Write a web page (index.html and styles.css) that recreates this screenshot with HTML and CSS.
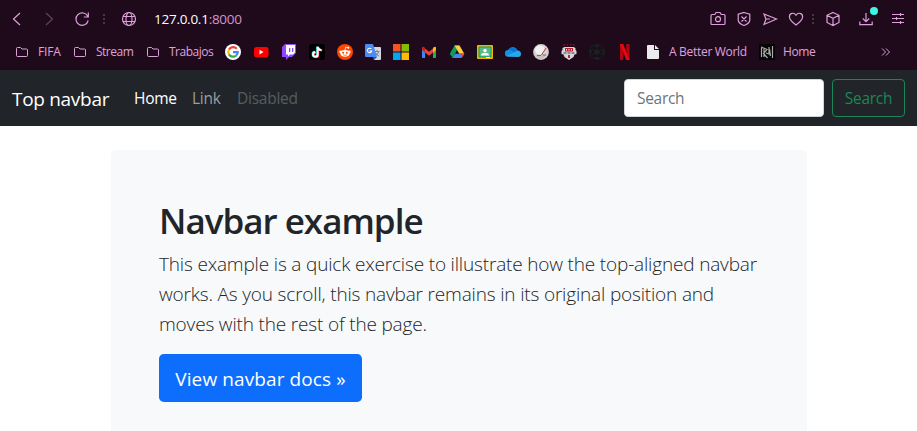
FILE: index.html
```html
<!DOCTYPE html>
<html lang="en">
<head>
<meta charset="utf-8">
<title>Top navbar</title>
<link rel="stylesheet" href="styles.css">
</head>
<body>
<header class="browser">
  <div class="toolbar">
    <svg class="ico back" viewBox="0 0 18 18"><path d="M12 3 5.500 9 12 15"/></svg>
    <svg class="ico forward" viewBox="0 0 18 18"><path d="M6 3l6.500 6L6 15"/></svg>
    <svg class="ico reload" viewBox="0 0 18 18"><path d="M14.800 6.500A6.200 6.200 0 1 0 15.200 10.500M15.300 2.500v4.500h-4.500"/></svg>
    <svg class="dots" viewBox="0 0 4 18"><path d="M1 4h2v2H1zM1 8h2v2H1zM1 12h2v2H1z"/></svg>
    <svg class="ico globe" viewBox="0 0 18 18"><circle cx="9" cy="9" r="6.500"/><ellipse cx="9" cy="9" rx="3" ry="6.500"/><path d="M3 6.500h12M3 11.500h12"/></svg>
    <div class="url">127.0.0.1<span>:8000</span></div>
    <div class="tools">
      <svg class="ico" viewBox="0 0 18 18"><path d="M3 4.500h2.800l1.200-2h4l1.200 2H15q1 0 1 1v8q0 1-1 1H3q-1 0-1-1v-8q0-1 1-1z"/><circle cx="9" cy="9.200" r="2.500"/></svg>
      <svg class="ico" viewBox="0 0 18 18"><path d="M9 2.500l5.800 1.800v6Q14.300 13.500 9 15.500 3.700 13.500 3.200 10.300v-6zM6.500 6.500l5 5M11.500 6.500l-5 5"/></svg>
      <svg class="ico" viewBox="0 0 18 18"><path d="M3 4l12.500 5L3 14.500 5 9zM5 9h4"/></svg>
      <svg class="ico" viewBox="0 0 18 18"><path d="M9 15C6 12.800 2.400 10 2.400 6.700 2.400 3 7 2 9 5.200 11 2 15.600 3 15.600 6.700 15.600 10 12 12.800 9 15z"/></svg>
      <svg class="dots tools-dots" viewBox="0 0 4 18"><path d="M1 4h2v2H1zM1 8h2v2H1zM1 12h2v2H1z"/></svg>
      <svg class="ico cube" viewBox="0 0 18 18"><path d="M9 2.500l6 2.800v7.200l-6 3-6-3V5.300zM3 5.300l6 3 6-3M9 8.300v7"/></svg>
      <div class="download">
        <svg class="ico" viewBox="0 0 18 18"><path d="M9 3v8.500M5.800 8.500 9 11.700l3.200-3.200M2.800 11.500v3.200h12.400v-3.200"/></svg>
        <i class="badge"></i>
      </div>
      <svg class="ico sliders" viewBox="0 0 18 18"><path d="M3 4.500h12M3 8.500h12M3 12.500h12M11.500 3v3M7.500 7v3M11.500 11v3"/></svg>
    </div>
  </div>
  <nav class="bookmarks">
    <svg class="folder" viewBox="0 0 12 12"><path d="M1.500 1.500h3L6 3h4.500q1 0 1 1v5.500q0 1-1 1h-9q-1 0-1-1v-7q0-1 1-1z"/></svg><span class="label fifa">FIFA</span>
    <svg class="folder" viewBox="0 0 12 12"><path d="M1.500 1.500h3L6 3h4.500q1 0 1 1v5.500q0 1-1 1h-9q-1 0-1-1v-7q0-1 1-1z"/></svg><span class="label stream">Stream</span>
    <svg class="folder" viewBox="0 0 12 12"><path d="M1.500 1.500h3L6 3h4.500q1 0 1 1v5.500q0 1-1 1h-9q-1 0-1-1v-7q0-1 1-1z"/></svg><span class="label trabajos">Trabajos</span>
    <div class="sites">
      <svg viewBox="0 0 16 16"><circle cx="8" cy="8" r="8" fill="#fff"/><g fill="none" stroke-width="2.200"><path d="M11.700 4.700A4.700 4.700 0 0 0 4 5.600" stroke="#ea4335"/><path d="M4 5.600a4.700 4.700 0 0 0 0 4.800" stroke="#fbbc05"/><path d="M4 10.400a4.700 4.700 0 0 0 7.200 1.100" stroke="#34a853"/><path d="M11.200 11.500A4.700 4.700 0 0 0 12.700 8.200H8" stroke="#4285f4"/></g></svg>
      <svg viewBox="0 0 16 16"><rect x="1" y="3" width="14.500" height="10.500" rx="2.500" fill="red"/><path d="M6.500 5.800v4.600l4-2.300z" fill="#fff"/></svg>
      <svg viewBox="0 0 16 16"><path d="M4 0h11v9l-4 4H8l-3 3v-3H1V3z" fill="#9146ff"/><path d="M5 1h9v7.500L12 10.500H9L7 12.500v-2H5z" fill="#fff"/><path d="M8 4h1.300v4H8zM11 4h1.300v4H11z" fill="#9146ff"/></svg>
      <svg viewBox="0 0 16 16"><rect width="16" height="16" rx="3" fill="#000"/><g fill="none" stroke-width="1.900"><path d="M8.200 2.500v7.700a2.300 2.300 0 1 1-2.300-2.400M8.200 3q.5 2.700 3.700 3" stroke="#25f4ee"/><path d="M9.300 3.200v7.700A2.300 2.300 0 1 1 7 8.600M9.300 3.500q.7 2.700 3.900 3" stroke="#fe2c55"/><path d="M8.700 2.800v7.700a2.300 2.300 0 1 1-2.300-2.300M8.700 3q.6 2.900 3.800 3.300" stroke="#fff"/></g></svg>
      <svg viewBox="0 0 16 16"><circle cx="8" cy="8" r="8" fill="#ff4500"/><ellipse cx="8" cy="9.300" rx="4.600" ry="3.400" fill="#fff"/><circle cx="3.500" cy="7.800" r="1.200" fill="#fff"/><circle cx="12.500" cy="7.800" r="1.200" fill="#fff"/><path d="M8 6l.8-3 2.500.6" fill="none" stroke="#fff" stroke-width=".8"/><circle cx="11.300" cy="3.700" r="1" fill="#fff"/><circle cx="6.200" cy="8.700" r="1" fill="#ff4500"/><circle cx="9.800" cy="8.700" r="1" fill="#ff4500"/><path d="M6 10.800q2 1.200 4 0" fill="none" stroke="#ff4500" stroke-width=".7"/></svg>
      <svg viewBox="0 0 16 16"><path d="M7 3h8q1 0 1 1v11q0 1-1 1H9z" fill="#d6d7dc"/><path d="M9.500 7.500h5M12 6v1.500M13.800 7.500Q13 10.500 9.800 12M10.500 8.500q1.500 3 3.800 3.700" fill="none" stroke="#70858c"/><path d="M1 0h7l4 13H1q-1 0-1-1V1q0-1 1-1z" fill="#4c8bf5"/><path d="M7.800 12.900H12L9 16z" fill="#2058bc"/><path d="M6.300 5A2.200 2.200 0 1 0 6.700 7H4.600" fill="none" stroke="#fff" stroke-width="1.100"/></svg>
      <svg viewBox="0 0 16 16"><path d="M0 0h7.500v7.500H0z" fill="#f35325"/><path d="M8.500 0H16v7.500H8.500z" fill="#81bc06"/><path d="M0 8.500h7.500V16H0z" fill="#05a6f0"/><path d="M8.500 8.500H16V16H8.500z" fill="#ffba08"/></svg>
      <svg viewBox="0 0 16 16"><path d="M1 4l3 2v8H2q-1 0-1-1z" fill="#4285f4"/><path d="M15 4l-3 2v8h2q1 0 1-1z" fill="#34a853"/><path d="M4 4.500 8 7.700l4-3.200v4L8 11.700 4 8.500z" fill="#ea4335"/><path d="M1 4q0-2 2-1l1 1v4.500L1 6z" fill="#c5221f"/><path d="M15 4q0-2-2-1l-1 1v4.500L15 6z" fill="#fbbc04"/></svg>
      <svg viewBox="0 0 16 16"><path d="M5.500 1.500h5L8 6 3.700 14 .8 9.700z" fill="#0f9d58"/><path d="M5.500 1.500h5l4.800 8.200h-5z" fill="#ffcd40"/><path d="M3.500 14 6 9.700h9.300L12.500 14z" fill="#4285f4"/><path d="M11 9.700h4.300L13.500 13z" fill="#ea4335"/></svg>
      <svg viewBox="0 0 16 16"><rect y="1" width="16" height="14" rx="1" fill="#f4b400"/><path d="M2 3h12v10H2z" fill="#57bb8a"/><path d="M2 3h12v10H2z" fill="none" stroke="#0f9d58"/><circle cx="8" cy="6.500" r="1.700" fill="#fff"/><path d="M4 11.500q0-2.800 4-2.800t4 2.800z" fill="#fff"/><path d="M9 13h4v1H9z" fill="#fff"/></svg>
      <svg viewBox="0 0 16 16"><path d="M3 12.800q-3-.3-3-3.300 0-3 3-3.300Q5 2.700 8.500 3.200q3 .3 4 3.300 3.500.3 3.500 3.400 0 2.800-3 3z" fill="#28a8ea"/><path d="M0 9.500q0-3 3-3.300Q5 2.700 8.500 3.200q3 .3 4 3.300L7 9l-6 2.500z" fill="#0874d4"/><path d="M3 6.200q3-.6 6 2.100l-7.700 3.700Q0 11 0 9.500q0-3 3-3.300z" fill="#1490df"/></svg>
      <svg viewBox="0 0 16 16"><circle cx="8" cy="8" r="7.900" fill="#d5d3d1"/><ellipse cx="7" cy="6" rx="5" ry="4.500" fill="#f2f1ef"/><path d="M2 11q6 1 11.500-1-1 4-5.500 5-4-.5-6-4z" fill="#c4c0be"/><path d="M13 4 8.500 11" stroke="#b73535"/><path d="M4 11.500h4M10 11h3" stroke="#866"/></svg>
      <svg viewBox="0 0 16 16"><path d="M2.500 1h1.500M5.500 .7H7M9 .7h1.500M12 1h1.500" stroke="#8b1225" stroke-width="1.300"/><path d="M1.500 4l2-1h9l2 1v2l1 1v3l-2 .5-1 2.500L8 16l-4.500-3-1-2.500L.5 10V7l1-1z" fill="#d8d5d8"/><path d="M4 4h8v3.500H4z" fill="#bc1f2f"/><path d="M5.500 5v1.500M8 5v1.500M10.500 5v1.500" stroke="#eee"/><path d="M2.500 9h3M6.500 9h3M10.500 9h3" stroke="#776f76" stroke-width="1.300"/><path d="M7 11h2v3H7z" fill="#bd2231"/></svg>
      <svg viewBox="0 0 16 16"><g fill="none" stroke="#15251f"><circle cx="8" cy="8" r="7.400"/><path d="M8 5V2M5.500 9.500l-3 1.500M10.500 9.500l3 1.500M5.500 6.500 3 5M10.500 6.500 13 5"/></g><path d="M8 5l3 2-1 3.500H6L5 7zM5 1h6L8 3.500zM0 6l3 0-1 5zM16 6l-3 0 1 5zM5 15l1-2h4l1 2z" fill="#15251f"/></svg>
      <svg viewBox="0 0 16 16"><path d="M3 0h3.200v16H3zM9.300 0h3.200v16H9.300z" fill="#b1060f"/><path d="M3 0h3.200l6.300 16H9.300z" fill="#e50914"/></svg>
      <svg viewBox="0 0 16 16"><path d="M3 1h6v5h5v8q0 1-1 1H3q-1 0-1-1V2q0-1 1-1zM10 1l4 4h-4z" fill="#e8eaed"/></svg>
    </div>
    <span class="label world">A Better World</span>
    <svg class="rune" viewBox="0 0 16 16"><path d="M0 0h16v16H0z" fill="#050505"/><path d="M2.500 4v9M2 3l6 2.500-3.500 4L8.500 14M5 5v8M10 3v7l-3-1M10.500 5l1 7M13.500 2v12" fill="none" stroke="#aaa" stroke-width="1.200"/></svg>
    <span class="label home">Home</span>
    <svg class="more" viewBox="0 0 10 10"><path d="M1 1.500 4.500 5 1 8.500M5 1.500 8.500 5 5 8.500"/></svg>
  </nav>
</header>
<nav class="navbar">
  <a class="brand">Top navbar</a>
  <a class="link active">Home</a>
  <a class="link second">Link</a>
  <a class="link disabled">Disabled</a>
  <form class="search">
    <input type="search" placeholder="Search" aria-label="Search">
    <button type="button">Search</button>
  </form>
</nav>
<main class="container">
  <section class="panel">
    <h1>Navbar example</h1>
    <p>This example is a quick exercise to illustrate how the top-aligned navbar<br>works. As you scroll, this navbar remains in its original position and<br>moves with the rest of the page.</p>
    <a class="docs">View navbar docs »</a>
  </section>
</main>
</body>
</html>
```
FILE: styles.css
```css
* { box-sizing: border-box; }
body { margin: 0; height: 431px; overflow: hidden; background: #fff; color: #212529; font: 15.5px/24px "Open Sans", "Noto Sans", sans-serif; }
svg { display: block; flex: none; }

.browser { height: 70px; background: #1f0a1c; color: #e0a0dc; }
.toolbar { display: flex; align-items: center; height: 38px; padding: 0 10px 0 8px; }
.ico { width: 18px; height: 18px; fill: none; stroke: #dc9fd9; stroke-width: 1.2; }
.forward { margin-left: 14px; stroke: #64405f; }
.reload { margin-left: 15px; }
.dots { width: 4px; height: 18px; margin-left: 11px; fill: #49344a; }
.globe { margin-left: 14px; }
.url { margin-left: 16px; font-size: 13.5px; letter-spacing: -.26px; white-space: nowrap; color: #fff; }
.url span { color: #d394d0; }
.tools { display: flex; align-items: center; margin-left: auto; }
.tools .ico + .ico { margin-left: 8px; }
.tools .tools-dots { margin-left: 6px; }
.tools .cube { margin-left: 9px; }
.download { position: relative; margin-left: 15px; }
.badge { position: absolute; left: 13px; top: -3px; width: 8px; height: 8px; border-radius: 50%; background: #3ff5e4; }
.tools .sliders { margin-left: 14px; }

.bookmarks { display: flex; align-items: center; height: 28px; padding: 0 26px 0 16px; }
.folder { width: 12px; height: 12px; margin-right: 10px; fill: none; stroke: #dc9fd9; }
.label { flex: none; font-size: 12px; line-height: 20px; white-space: nowrap; }
.fifa { width: 36px; letter-spacing: -.2px; }
.stream { width: 51px; letter-spacing: -.5px; }
.trabajos { width: 56px; letter-spacing: -.5px; }
.sites { display: flex; gap: 12px; }
.sites svg, .rune { width: 16px; height: 16px; }
.world { width: 90px; margin-left: 8px; letter-spacing: -.3px; }
.home { margin-left: 8px; letter-spacing: -.4px; }
.more { width: 10px; height: 10px; margin-left: auto; fill: none; stroke: #dc9fd9; }

.navbar { display: flex; align-items: center; height: 56px; padding: 0 12px; background: #212529; color: #fff; }
.brand { width: 122px; padding-top: 1px; font-size: 19px; line-height: 30px; white-space: nowrap; letter-spacing: -.3px; }
.link { white-space: nowrap; letter-spacing: -.25px; }
.active { width: 58px; }
.second { width: 45px; color: #9b9d9f; }
.disabled { color: #585c5f; }
.search { display: flex; gap: 8px; margin-left: auto; }
.search input { width: 200px; height: 38px; padding: 6px 12px; border: 1px solid #ced4da; border-radius: 4px; background: #fff; font: inherit; letter-spacing: -.3px; }
.search input::placeholder { color: #6c757d; opacity: 1; }
.search button { width: 73px; height: 38px; padding: 0; border: 1px solid #198754; border-radius: 4px; background: none; color: #198754; font: inherit; letter-spacing: -.3px; }

.container { width: 696px; margin: 24px auto 0 111px; }
.panel { height: 300px; padding: 49px 48px 0; border-radius: 4.800px; background: #f8f9fa; }
h1 { margin: 0 0 7px; font-size: 35px; line-height: 43px; font-weight: 600; letter-spacing: -1px; white-space: nowrap; }
p { margin: 0 0 15px; font-size: 19px; line-height: 30px; font-weight: 300; white-space: nowrap; letter-spacing: -.17px; }
.docs { display: flex; align-items: center; justify-content: center; width: 203px; height: 48px; padding-top: 2px; border-radius: 4.800px; background: #0d6efd; color: #fff; font-size: 19px; letter-spacing: .1px; white-space: nowrap; }
```
